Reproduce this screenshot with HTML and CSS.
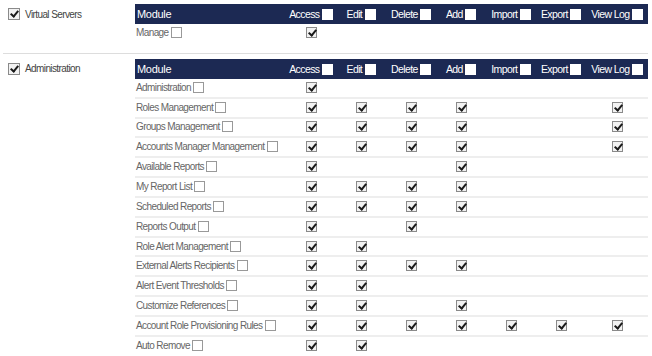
FILE: index.html
```html
<!DOCTYPE html>
<html lang="en">
<head>
  <meta charset="UTF-8">
  <title>Permissions</title>
  <link rel="stylesheet" href="styles.css">
</head>
<body>
  <div class="section">
    <div class="group"><span class="cb on"></span>Virtual Servers</div>
    <table class="perm">
      <thead>
        <tr>
          <th class="mod">Module</th>
          <th>Access <span class="hb"></span></th>
          <th>Edit <span class="hb"></span></th>
          <th>Delete <span class="hb"></span></th>
          <th>Add <span class="hb"></span></th>
          <th>Import <span class="hb"></span></th>
          <th>Export <span class="hb"></span></th>
          <th>View Log <span class="hb"></span></th>
        </tr>
      </thead>
      <tbody>
        <tr><td class="mod">Manage <span class="cb"></span></td><td><span class="cb on"></span></td><td></td><td></td><td></td><td></td><td></td><td></td></tr>
      </tbody>
    </table>
  </div>

  <hr class="sep">

  <div class="section">
    <div class="group"><span class="cb on"></span>Administration</div>
    <table class="perm">
      <thead>
        <tr>
          <th class="mod">Module</th>
          <th>Access <span class="hb"></span></th>
          <th>Edit <span class="hb"></span></th>
          <th>Delete <span class="hb"></span></th>
          <th>Add <span class="hb"></span></th>
          <th>Import <span class="hb"></span></th>
          <th>Export <span class="hb"></span></th>
          <th>View Log <span class="hb"></span></th>
        </tr>
      </thead>
      <tbody>
        <tr><td class="mod">Administration <span class="cb"></span></td><td><span class="cb on"></span></td><td></td><td></td><td></td><td></td><td></td><td></td></tr>
        <tr><td class="mod">Roles Management <span class="cb"></span></td><td><span class="cb on"></span></td><td><span class="cb on"></span></td><td><span class="cb on"></span></td><td><span class="cb on"></span></td><td></td><td></td><td><span class="cb on"></span></td></tr>
        <tr><td class="mod">Groups Management <span class="cb"></span></td><td><span class="cb on"></span></td><td><span class="cb on"></span></td><td><span class="cb on"></span></td><td><span class="cb on"></span></td><td></td><td></td><td><span class="cb on"></span></td></tr>
        <tr><td class="mod">Accounts Manager Management <span class="cb"></span></td><td><span class="cb on"></span></td><td><span class="cb on"></span></td><td><span class="cb on"></span></td><td><span class="cb on"></span></td><td></td><td></td><td><span class="cb on"></span></td></tr>
        <tr><td class="mod">Available Reports <span class="cb"></span></td><td><span class="cb on"></span></td><td></td><td></td><td><span class="cb on"></span></td><td></td><td></td><td></td></tr>
        <tr><td class="mod">My Report List <span class="cb"></span></td><td><span class="cb on"></span></td><td><span class="cb on"></span></td><td><span class="cb on"></span></td><td><span class="cb on"></span></td><td></td><td></td><td></td></tr>
        <tr><td class="mod">Scheduled Reports <span class="cb"></span></td><td><span class="cb on"></span></td><td><span class="cb on"></span></td><td><span class="cb on"></span></td><td><span class="cb on"></span></td><td></td><td></td><td></td></tr>
        <tr><td class="mod">Reports Output <span class="cb"></span></td><td><span class="cb on"></span></td><td></td><td><span class="cb on"></span></td><td></td><td></td><td></td><td></td></tr>
        <tr><td class="mod">Role Alert Management <span class="cb"></span></td><td><span class="cb on"></span></td><td><span class="cb on"></span></td><td></td><td></td><td></td><td></td><td></td></tr>
        <tr><td class="mod">External Alerts Recipients <span class="cb"></span></td><td><span class="cb on"></span></td><td><span class="cb on"></span></td><td><span class="cb on"></span></td><td><span class="cb on"></span></td><td></td><td></td><td></td></tr>
        <tr><td class="mod">Alert Event Thresholds <span class="cb"></span></td><td><span class="cb on"></span></td><td><span class="cb on"></span></td><td></td><td></td><td></td><td></td><td></td></tr>
        <tr><td class="mod">Customize References <span class="cb"></span></td><td><span class="cb on"></span></td><td><span class="cb on"></span></td><td></td><td><span class="cb on"></span></td><td></td><td></td><td></td></tr>
        <tr><td class="mod">Account Role Provisioning Rules <span class="cb"></span></td><td><span class="cb on"></span></td><td><span class="cb on"></span></td><td><span class="cb on"></span></td><td><span class="cb on"></span></td><td><span class="cb on"></span></td><td><span class="cb on"></span></td><td><span class="cb on"></span></td></tr>
        <tr><td class="mod">Auto Remove <span class="cb"></span></td><td><span class="cb on"></span></td><td><span class="cb on"></span></td><td></td><td></td><td></td><td></td><td></td></tr>
      </tbody>
    </table>
  </div>
</body>
</html>
```

FILE: styles.css
```css
body {
  margin: 0;
  padding: 4px 4px 0 0;
  font-family: "Liberation Sans", Arial, sans-serif;
  font-size: 10px;
  letter-spacing: -0.6px;
  color: #333;
  background: #fff;
}
.section {
  display: flex;
  align-items: flex-start;
}
.group {
  width: 135px;
  flex: none;
  display: flex;
  align-items: center;
  gap: 5px;
  height: 20px;
  padding-left: 8px;
  box-sizing: border-box;
  color: #444;
}
.sep {
  border: none;
  border-top: 1px solid #ddd;
  margin: 11px 0 5px 3px;
}
.perm {
  width: 513px;
  table-layout: fixed;
  border-collapse: collapse;
}
.perm th {
  background-color: #1c2953;
  color: #fff;
  font-weight: normal;
  font-size: 10.5px;
  height: 20px;
  padding: 0;
  white-space: nowrap;
  width: 50px;
}
.perm th:last-child {
  width: 62px;
}
.perm th.mod {
  width: auto;
  text-align: left;
  padding-left: 2px;
  font-size: 11px;
  letter-spacing: -0.3px;
}
.perm td {
  height: 17.85px;
  padding: 0;
  text-align: center;
  border-bottom: 2px solid #eee;
  line-height: 12px;
}
.perm td.mod {
  text-align: left;
  padding-left: 1px;
  color: #666;
  white-space: nowrap;
}
.perm tbody tr:last-child td {
  border-bottom: none;
}
.hb {
  display: inline-block;
  width: 11px;
  height: 11px;
  background: #fff;
  vertical-align: -2px;
}
.cb {
  display: inline-block;
  position: relative;
  width: 11px;
  height: 11px;
  border: 1px solid #999;
  background: #fff;
  box-sizing: border-box;
  vertical-align: -2px;
}
.group .cb {
  width: 12px;
  height: 12px;
}
.cb.on {
  border-color: #8a8a8a;
  background: #f2f2f2;
}
.cb.on::after {
  content: "";
  position: absolute;
  left: 3px;
  top: 0;
  width: 3px;
  height: 6px;
  border-right: 2px solid #1a1a1a;
  border-bottom: 2px solid #1a1a1a;
  transform: rotate(40deg);
}
```
